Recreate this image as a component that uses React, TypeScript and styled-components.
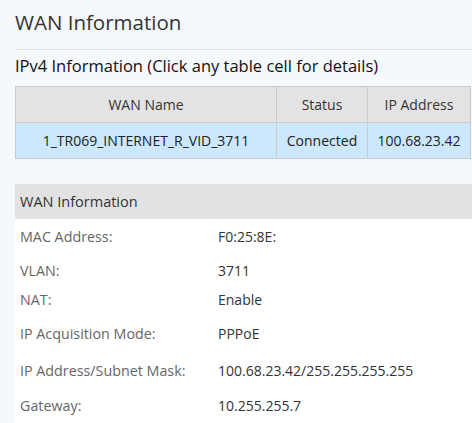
import styled, { createGlobalStyle } from "styled-components";

const GlobalStyle = createGlobalStyle`
  html, body {
    margin: 0;
    padding: 0;
    background: #f5f8fc;
    font-family: "Open Sans", "Noto Sans", Arial, sans-serif;
    color: #333;
    overflow: hidden;
  }
`;

/* ページ全体 */
const Page = styled.div`
  padding-left: 15px;
  width: 457px;
`;

const Title = styled.h1`
  margin: 0;
  height: 50px;
  box-sizing: border-box;
  padding-top: 8px;
  font-size: 20.5px;
  font-weight: normal;
  color: #333;
  border-bottom: 1px solid #e3e3e3;
`;

const SubTitle = styled.h2`
  margin: 0;
  padding-top: 4px;
  height: 36px;
  box-sizing: border-box;
  font-size: 16.5px;
  font-weight: normal;
  color: #111;
`;

const WanTable = styled.table`
  width: 456px;
  border-collapse: collapse;
  font-size: 14px;
  text-align: center;

  & th, & td {
    border: 1px solid #cbcbcb;
    height: 35px;
    padding: 0 8px;
    font-weight: normal;
    white-space: nowrap;
  }
  & th {
    background: #e3e3e3;
    color: #333;
  }
  & td {
    background: #cce8ff;
    color: #222;
    cursor: pointer;
  }
`;

const Panel = styled.section`
  margin-top: 25px;
  background: #fff;
`;

const PanelHead = styled.div`
  height: 35px;
  line-height: 35px;
  padding-left: 5px;
  background: #e2e2e2;
  font-size: 14.5px;
  color: #333;
`;

const InfoRow = styled.div<{ $h: number }>`
  display: grid;
  grid-template-columns: 198px 1fr;
  align-items: center;
  height: ${(p) => p.$h}px;
  padding-left: 5px;
  font-size: 14.3px;
`;

const Label = styled.span`
  color: #666;
`;

const Value = styled.span`
  color: #333;
  font-size: 14px;
`;

const rows: { label: string; value: string; h: number }[] = [
  { label: "MAC Address:", value: "F0:25:8E:", h: 34 },
  { label: "VLAN:", value: "3711", h: 34 },
  { label: "NAT:", value: "Enable", h: 24 },
  { label: "IP Acquisition Mode:", value: "PPPoE", h: 44 },
  { label: "IP Address/Subnet Mask:", value: "100.68.23.42/255.255.255.255", h: 30 },
  { label: "Gateway:", value: "10.255.255.7", h: 40 },
];

export default function App() {
  return (
    <>
      <GlobalStyle />
      <Page>
        <Title>WAN Information</Title>
        <SubTitle>IPv4 Information (Click any table cell for details)</SubTitle>
        <WanTable>
          <thead>
            <tr>
              <th style={{ width: 244 }}>WAN Name</th>
              <th style={{ width: 74 }}>Status</th>
              <th>IP Address</th>
            </tr>
          </thead>
          <tbody>
            <tr>
              <td>1_TR069_INTERNET_R_VID_3711</td>
              <td>Connected</td>
              <td>100.68.23.42</td>
            </tr>
          </tbody>
        </WanTable>
        <Panel>
          <PanelHead>WAN Information</PanelHead>
          {rows.map((r) => (
            <InfoRow key={r.label} $h={r.h}>
              <Label>{r.label}</Label>
              <Value>{r.value}</Value>
            </InfoRow>
          ))}
        </Panel>
      </Page>
    </>
  );
}
